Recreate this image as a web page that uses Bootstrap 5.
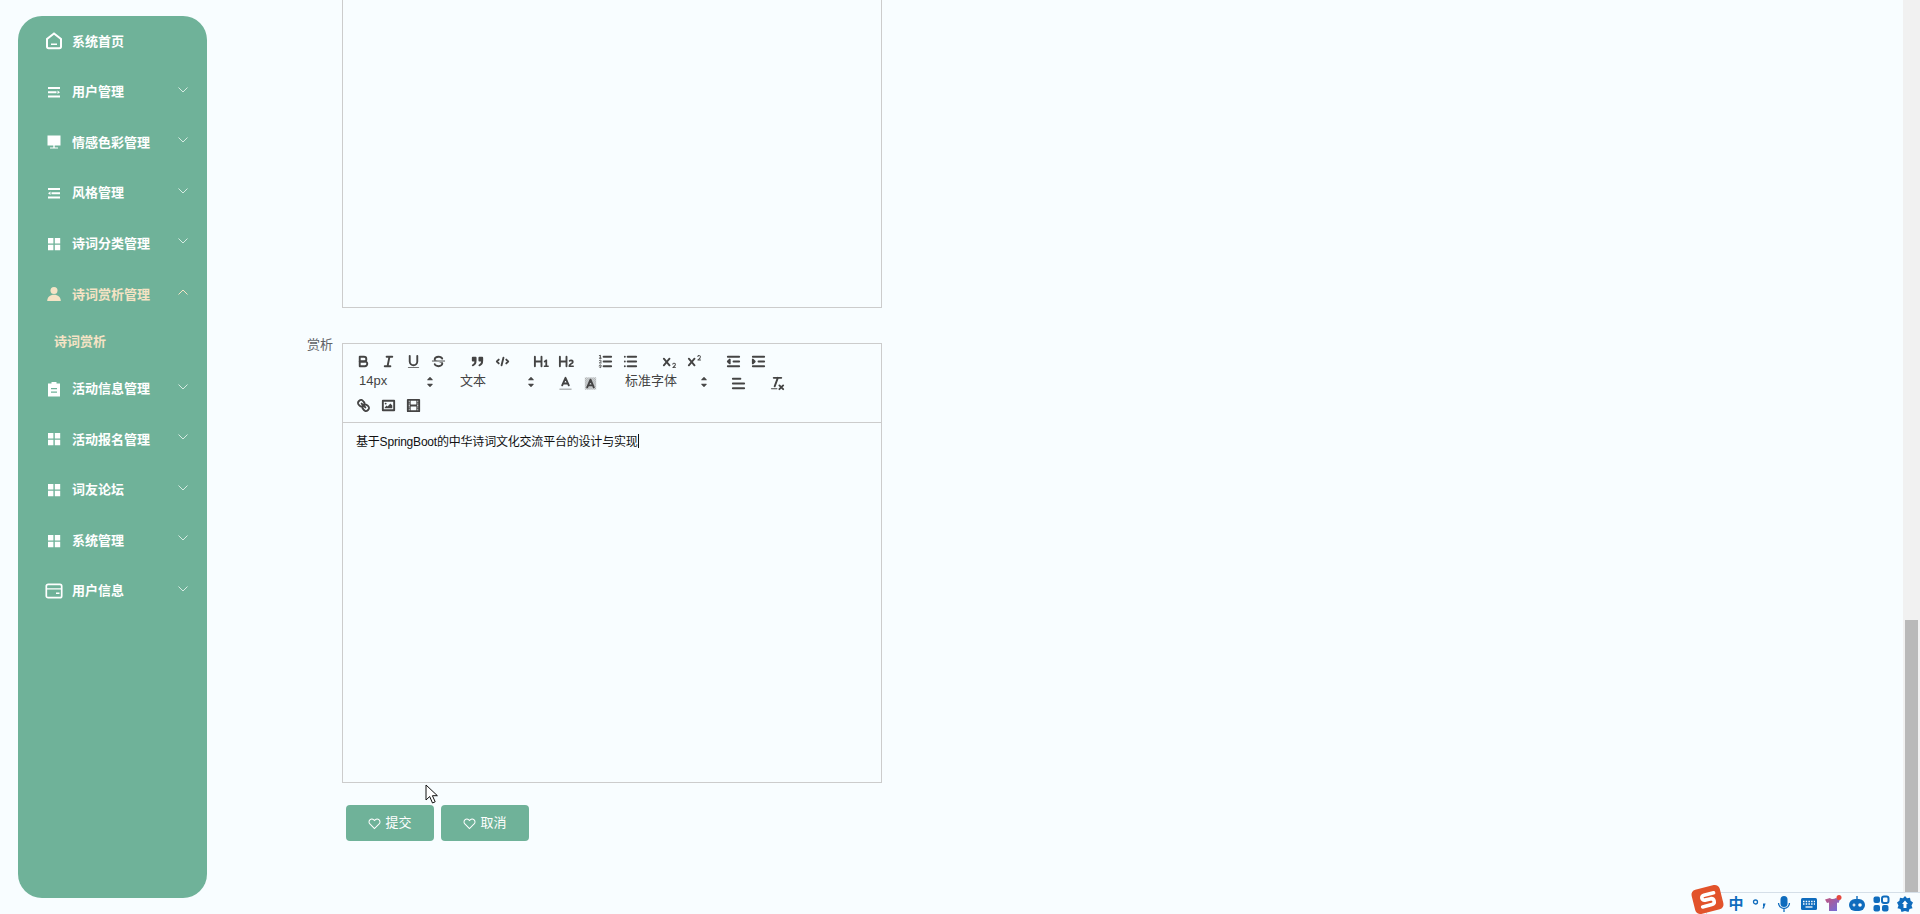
<!DOCTYPE html>
<html lang="zh-CN">
<head>
  <meta charset="UTF-8" />
  <title>诗词赏析</title>
  <link href="https://cdn.jsdelivr.net/npm/bootstrap@5.3.0/dist/css/bootstrap.min.css" rel="stylesheet" />
  <style>
    html, body { height: 914px; overflow: hidden; }
    body {
      background: #f8fdff;
      font-family: "Liberation Sans", "Noto Sans CJK SC", sans-serif;
      color: #333;
    }
    .page-wrap { height: 914px; }

    /* sidebar */
    .side-menu {
      width: 189px;
      height: 882px;
      margin: 16px 0 16px 18px;
      background: #6fb299;
      border-radius: 24px;
      flex-shrink: 0;
      overflow: hidden;
    }
    .menu-row {
      height: 50.6px;
      padding-left: 27px;
      color: #fff;
      font-size: 13px;
      font-weight: 700;
      position: relative;
    }
    .menu-row .menu-ico { width: 18px; height: 18px; margin-right: 9px; flex-shrink: 0; }
    .menu-row .menu-arrow { width: 12px; height: 8px; position: absolute; left: 159px; top: 19px; }
    .menu-row.is-open { color: #f5e3c5; }
    .sub-row {
      height: 44px;
      padding-left: 36px;
      color: #f5e3c5;
      font-size: 13px;
      font-weight: 700;
    }

    /* form */
    .form-area { width: 700px; }
    .old-box {
      width: 540px;
      height: 308px;
      margin-left: 135px;
      border: 1px solid #ccc;
      border-top: 0;
    }
    .form-line { margin-top: 35px; }
    .form-lbl {
      width: 126px;
      text-align: right;
      margin-right: 9px;
      font-size: 13px;
      line-height: 18px;
      margin-top: -7px;
      color: #606266;
    }
    .editor-wrap { width: 540px; }
    .edit-bar {
      height: 80px;
      border: 1px solid #ccc;
      padding: 6px 0 0 8px;
      align-content: flex-start;
    }
    .tool-grp { margin-right: 14px; height: 22px; }
    .tool-btn { width: 25px; height: 22px; }
    .tool-btn svg { width: 17px; height: 17px; }
    .qs { fill: none; stroke: #444; stroke-width: 2; stroke-linecap: round; stroke-linejoin: round; }
    .qt { fill: none; stroke: #444; stroke-width: 1; stroke-linecap: round; stroke-linejoin: round; }
    .qf { fill: #444; stroke: none; }
    .tool-pick {
      width: 87px;
      height: 22px;
      padding: 0 0 0 8px;
      color: #444;
      font-size: 13px;
      line-height: 18px;
    }
    .tool-pick.wide-pick { width: 95px; }
    .tool-pick svg { width: 20px; height: 20px; margin-right: -2px; }
    .edit-body {
      height: 360px;
      border: 1px solid #ccc;
      border-top: 0;
      padding: 10px 13px;
      font-size: 12px;
      line-height: 18px;
      letter-spacing: -.2px;
      color: #111;
    }
    .caret-bar { display: inline-block; width: 1px; height: 14px; background: #111; vertical-align: -2px; }
    .form-btns { margin: 22px 0 0 139px; gap: 7px; }
    .act-btn {
      width: 88px;
      height: 36px;
      padding: 0;
      background: #6fb299;
      border: 0;
      border-radius: 4px;
      color: #fff;
      font-size: 13px;
    }
    .act-btn:hover { background: #6fb299; color: #fff; }
    .act-btn svg { width: 13px; height: 13px; margin-right: 4px; }

    /* scrollbar drawn as its own column */
    .fake-scroll { width: 17px; background: #f1f1f1; padding: 620px 2px 0 2px; flex-shrink: 0; }
    .fake-thumb { height: 294px; background: #b9b9b9; }

    /* things lying over the page */
    .mouse-ptr { position: absolute; left: 425px; top: 784px; width: 14px; height: 21px; }
    .ime-bar {
      position: absolute;
      left: 1706px;
      top: 892px;
      width: 214px;
      height: 22px;
      background: #f8fdff;
      border-top: 1px solid #d5dfe8;
      border-left: 1px solid #d5dfe8;
      color: #0f6cbd;
    }
    .ime-logo {
      position: absolute;
      left: 1693px;
      top: 887px;
      width: 29px;
      height: 25px;
      background: #e2532b;
      border-radius: 5px;
      transform: rotate(-14deg);
    }
    .ime-zh { font-size: 15px; font-weight: 700; margin-left: 17px; width: 24.2px; line-height: 20px; text-align: center; }
    .ime-ico { width: 18px; height: 18px; margin: 0 3.1px; flex-shrink: 0; }
  </style>
</head>
<body>
  <svg width="0" height="0" class="position-absolute">
    <defs>
      <pattern id="hatch" width="2" height="2" patternUnits="userSpaceOnUse"><rect width="1" height="1" fill="#444"/><rect x="1" y="1" width="1" height="1" fill="#444"/></pattern>
    </defs>
    <symbol id="i-grid" viewBox="0 0 18 18"><path fill="currentColor" d="M3 3h5.400v5.400H3zM9.800 3h5.400v5.400H9.800zM3 9.800h5.400v5.400H3zM9.800 9.800h5.400v5.400H9.800z"/></symbol>
    <symbol id="i-down" viewBox="0 0 12 8"><path fill="none" stroke="#d6ebe2" stroke-width="1" d="M1.500 1.500 6 6l4.500-4.500"/></symbol>
    <symbol id="i-heart" viewBox="0 0 14 14"><path fill="none" stroke="#fff" stroke-width="1.100" d="M7 12.400 2 7.400a3 3 0 0 1 0-4.300 3.100 3.100 0 0 1 4.300 0l.7.700.7-.7a3.100 3.100 0 0 1 4.300 0 3 3 0 0 1 0 4.300z"/></symbol>
    <symbol id="i-updown" viewBox="0 0 18 18"><path class="qf" d="M7 11h4l-2 2zM7 7h4L9 5z"/><path class="qt" d="M7 11h4l-2 2zM7 7h4L9 5z"/></symbol>
  </svg>

  <div class="page-wrap d-flex">
    <aside class="side-menu">
      <div class="menu-row d-flex align-items-center">
        <svg class="menu-ico" viewBox="0 0 18 18"><path fill="none" stroke="currentColor" stroke-width="2" d="M9 1.500 2 7v7.600a1.600 1.600 0 0 0 1.600 1.600h10.800a1.600 1.600 0 0 0 1.600-1.600V7z"/><path fill="currentColor" d="M6 11.500h6V13H6z"/></svg>
        系统首页
      </div>
      <div class="menu-row d-flex align-items-center">
        <svg class="menu-ico" viewBox="0 0 18 18"><path fill="currentColor" d="M3 4h12v2H3zM3 8.200h8.500v2H3zM3 12.400h12v2H3zM12.500 7.500 15 9.200l-2.500 1.700z"/></svg>
        用户管理
        <svg class="menu-arrow"><use href="#i-down" /></svg>
      </div>
      <div class="menu-row d-flex align-items-center">
        <svg class="menu-ico" viewBox="0 0 18 18"><path fill="currentColor" d="M2.500 2.500h13v10h-13zM8.300 12.500h1.400v2H8.300zM5 14.600h8v1H5z"/></svg>
        情感色彩管理
        <svg class="menu-arrow"><use href="#i-down" /></svg>
      </div>
      <div class="menu-row d-flex align-items-center">
        <svg class="menu-ico" viewBox="0 0 18 18"><path fill="currentColor" d="M3 4h12v2H3zM6.500 8.200H15v2H6.500zM3 12.400h12v2H3zM5.500 7.500 3 9.200l2.500 1.700z"/></svg>
        风格管理
        <svg class="menu-arrow"><use href="#i-down" /></svg>
      </div>
      <div class="menu-row d-flex align-items-center">
        <svg class="menu-ico"><use href="#i-grid" /></svg>
        诗词分类管理
        <svg class="menu-arrow"><use href="#i-down" /></svg>
      </div>
      <div class="menu-row is-open d-flex align-items-center">
        <svg class="menu-ico" viewBox="0 0 18 18"><circle cx="9" cy="5.400" r="3.500" fill="currentColor"/><path fill="currentColor" d="M2.200 16c0-4 2.800-6.300 6.800-6.300s6.800 2.300 6.800 6.300z"/></svg>
        诗词赏析管理
        <svg class="menu-arrow" viewBox="0 0 12 8"><path fill="none" stroke="#f5e3c5" stroke-width="1" d="M1.500 6.500 6 2l4.500 4.500"/></svg>
      </div>
      <div class="sub-row d-flex align-items-center">诗词赏析</div>
      <div class="menu-row d-flex align-items-center">
        <svg class="menu-ico" viewBox="0 0 18 18"><path fill="currentColor" fill-rule="evenodd" d="M3 3.500h3.500V2h5v1.500H15v13H3zM6 8v1.300h6V8zM6 11.500v1.300h6v-1.300z"/></svg>
        活动信息管理
        <svg class="menu-arrow"><use href="#i-down" /></svg>
      </div>
      <div class="menu-row d-flex align-items-center">
        <svg class="menu-ico"><use href="#i-grid" /></svg>
        活动报名管理
        <svg class="menu-arrow"><use href="#i-down" /></svg>
      </div>
      <div class="menu-row d-flex align-items-center">
        <svg class="menu-ico"><use href="#i-grid" /></svg>
        词友论坛
        <svg class="menu-arrow"><use href="#i-down" /></svg>
      </div>
      <div class="menu-row d-flex align-items-center">
        <svg class="menu-ico"><use href="#i-grid" /></svg>
        系统管理
        <svg class="menu-arrow"><use href="#i-down" /></svg>
      </div>
      <div class="menu-row d-flex align-items-center">
        <svg class="menu-ico" viewBox="0 0 18 18"><rect x="1.300" y="2.300" width="15.400" height="13.400" rx="1.800" fill="none" stroke="currentColor" stroke-width="1.700"/><path fill="currentColor" d="M1.500 6.200h15v1.400h-15zM11 10.500h3.500V12H11z"/></svg>
        用户信息
        <svg class="menu-arrow"><use href="#i-down" /></svg>
      </div>
    </aside>

    <main class="flex-grow-1">
      <div class="form-area">
        <div class="old-box"></div>

        <div class="form-line d-flex">
          <label class="form-lbl">赏析</label>
          <div class="editor-wrap">
            <div class="edit-bar d-flex flex-wrap">
              <span class="tool-grp d-flex">
                <span class="tool-btn d-flex align-items-center justify-content-center"><svg viewBox="0 0 18 18"><path class="qs" d="M5 4h4.500A2.500 2.500 0 0 1 12 6.500 2.500 2.500 0 0 1 9.500 9H5z"/><path class="qs" d="M5 9h5.500a2.500 2.500 0 0 1 2.500 2.500 2.500 2.500 0 0 1-2.500 2.500H5z"/></svg></span>
                <span class="tool-btn d-flex align-items-center justify-content-center"><svg viewBox="0 0 18 18"><path class="qs" d="M7 4h6M5 14h6M8 14l2-10"/></svg></span>
                <span class="tool-btn d-flex align-items-center justify-content-center"><svg viewBox="0 0 18 18"><path class="qs" d="M5 3v6a4 4 0 0 0 4 4 4 4 0 0 0 4-4V3"/><rect class="qf" x="3" y="15" width="12" height="1" rx=".5"/></svg></span>
                <span class="tool-btn d-flex align-items-center justify-content-center"><svg viewBox="0 0 18 18"><path class="qt" d="M15.500 8.500h-13"/><path class="qf" d="M9 8C6.500 7.800 6 7.500 6 6.500 6 5.800 7.300 5 9 5c1.600 0 2.800.7 3 1.300a1 1 0 0 0 1.900-.6C13.400 4.100 11.400 3 9 3 6.200 3 4 4.500 4 6.500a3.200 3.200 0 0 0 .5 1.800z"/><path class="qf" d="M9 10c2.500.2 3 .5 3 1.500 0 .7-1.300 1.500-3 1.500-1.600 0-2.800-.7-3-1.300a1 1 0 1 0-1.900.6C4.600 13.900 6.600 15 9 15c2.800 0 5-1.500 5-3.500a3.200 3.200 0 0 0-.5-1.800z"/></svg></span>
              </span>
              <span class="tool-grp d-flex">
                <span class="tool-btn d-flex align-items-center justify-content-center"><svg viewBox="0 0 18 18"><path class="qf" d="M4 5h3v3H4zM11 5h3v3h-3z"/><path class="qs" d="M4 5h3v3H4zM11 5h3v3h-3zM7 8c0 4-3 5-3 5M14 8c0 4-3 5-3 5"/></svg></span>
                <span class="tool-btn d-flex align-items-center justify-content-center"><svg viewBox="0 0 18 18"><path class="qs" d="M5 7 3 9l2 2M13 7l2 2-2 2M10 5 8 13"/></svg></span>
              </span>
              <span class="tool-grp d-flex">
                <span class="tool-btn d-flex align-items-center justify-content-center"><svg viewBox="0 0 18 18"><path class="qf" d="M10 4v10a1 1 0 0 1-2 0v-4H3v4a1 1 0 0 1-2 0V4a1 1 0 0 1 2 0v4h5V4a1 1 0 0 1 2 0zm6.070 9.210h-1.080V7.600a.54.54 0 0 0-.6-.6h-.63a1 1 0 0 0-.75.3l-1.370 1.270a.54.54 0 0 0-.02.86l.29.31a.54.54 0 0 0 .85.03l.1-.09a1.200 1.200 0 0 0 .24-.35h.02s-.01.31-.01.6v3.280H12.040a.54.54 0 0 0-.6.6v.44a.54.54 0 0 0 .6.6h4.030a.54.54 0 0 0 .6-.6v-.44a.54.54 0 0 0-.6-.6z"/></svg></span>
                <span class="tool-btn d-flex align-items-center justify-content-center"><svg viewBox="0 0 18 18"><path class="qf" d="M16.740 13.810v.44a.54.54 0 0 1-.6.6h-4.290a.58.58 0 0 1-.65-.6v-.24c0-2.910 3.400-3.420 3.400-4.550a.78.78 0 0 0-.85-.78 1.180 1.180 0 0 0-.84.380c-.27.260-.56.370-.86.130l-.43-.34c-.31-.24-.39-.52-.15-.81a2.970 2.970 0 0 1 2.450-1.180 2.450 2.450 0 0 1 2.680 2.410c0 2.450-3.180 2.930-3.280 3.940h2.790a.54.54 0 0 1 .63.600zM9 3a1 1 0 0 0-1 1v4H3V4a1 1 0 0 0-2 0v10a1 1 0 0 0 2 0v-4h5v4a1 1 0 0 0 2 0V4a1 1 0 0 0-1-1z"/></svg></span>
              </span>
              <span class="tool-grp d-flex">
                <span class="tool-btn d-flex align-items-center justify-content-center"><svg viewBox="0 0 18 18"><path class="qs" d="M7 4h8M7 9h8M7 14h8"/><path class="qt" d="M2.500 5.500h2M4.500 10.500h-2c0-.2 1.900-1.100 1.900-2.200a1 1 0 0 0-1.900-.1M2.500 14.800a1 1 0 0 0 1.900-.1.700.700 0 0 0-.6-.7.700.700 0 0 0 .6-.7 1 1 0 0 0-1.900-.1"/><path class="qf" d="M3.500 6A.5.5 0 0 1 3 5.500V3.100l-.3.1a.5.5 0 0 1-.7-.2c-.1-.3 0-.3.300-.5l1-.5a.5.500 0 0 1 .7.500v3a.5.500 0 0 1-.5.500z"/></svg></span>
                <span class="tool-btn d-flex align-items-center justify-content-center"><svg viewBox="0 0 18 18"><path class="qs" d="M6 4h9M6 9h9M6 14h9M3 4h0M3 9h0M3 14h0"/></svg></span>
              </span>
              <span class="tool-grp d-flex">
                <span class="tool-btn d-flex align-items-center justify-content-center"><svg viewBox="0 0 18 18"><path class="qf" d="M15.500 15h-1.640a3.860 3.860 0 0 0 1.910-2.980 1.800 1.800 0 0 0-1.600-1.750A1.920 1.920 0 0 0 12.020 11.700a.5.5 0 1 0 .96.290.91.910 0 0 1 1.050-.73.810.810 0 0 1 .74.760c0 1.080-1.170 1.870-1.940 2.430A1.460 1.460 0 0 0 12 15.500a.5.5 0 0 0 .5.500h3a.5.500 0 0 0 0-1z"/><path class="qf" d="M9.650 5.240a1 1 0 0 0-1.410.11L6 7.960 3.760 5.350a1 1 0 0 0-1.520 1.300L4.680 9.500l-2.440 2.850a1 1 0 1 0 1.520 1.300L6 11.040l2.240 2.610a1 1 0 1 0 1.520-1.300L7.320 9.500l2.440-2.850a1 1 0 0 0-.11-1.410z"/></svg></span>
                <span class="tool-btn d-flex align-items-center justify-content-center"><svg viewBox="0 0 18 18"><path class="qf" d="M15.500 7h-1.640a4 4 0 0 0 1.910-2.980 1.800 1.800 0 0 0-1.600-1.750A1.920 1.920 0 0 0 12.020 3.700a.5.5 0 1 0 .96.290.92.920 0 0 1 1.050-.73.810.810 0 0 1 .74.760c0 1.080-1.160 1.930-1.930 2.490A1.420 1.420 0 0 0 12 7.500a.5.5 0 0 0 .5.500h3a.5.500 0 0 0 0-1z"/><path class="qf" d="M9.650 5.240a1 1 0 0 0-1.410.11L6 7.960 3.760 5.350a1 1 0 1 0-1.520 1.300L4.680 9.500l-2.440 2.850a1 1 0 1 0 1.520 1.300L6 11.040l2.240 2.610a1 1 0 0 0 1.520-1.300L7.320 9.500l2.440-2.850a1 1 0 0 0-.11-1.410z"/></svg></span>
              </span>
              <span class="tool-grp d-flex">
                <span class="tool-btn d-flex align-items-center justify-content-center"><svg viewBox="0 0 18 18"><path class="qs" d="M3 14h12M3 4h12M9 9h6"/><path class="qf" d="M5 7v4L3 9z"/><path class="qs" d="M5 7v4L3 9z"/></svg></span>
                <span class="tool-btn d-flex align-items-center justify-content-center"><svg viewBox="0 0 18 18"><path class="qs" d="M3 14h12M3 4h12M9 9h6"/><path class="qf" d="M3 7v4l2-2z"/><path class="qs" d="M3 7v4l2-2z"/></svg></span>
              </span>

              <span class="tool-grp d-flex">
                <span class="tool-pick d-flex justify-content-between">14px<svg><use href="#i-updown" /></svg></span>
              </span>
              <span class="tool-grp d-flex">
                <span class="tool-pick d-flex justify-content-between">文本<svg><use href="#i-updown" /></svg></span>
              </span>
              <span class="tool-grp d-flex">
                <span class="tool-btn d-flex align-items-center justify-content-center"><svg viewBox="0 0 18 18"><path class="qt" d="M3 15h12" stroke-opacity=".6"/><path class="qs" d="M5.500 11 9 3l3.500 8M11.600 9H6.400"/></svg></span>
                <span class="tool-btn d-flex align-items-center justify-content-center"><svg viewBox="0 0 18 18"><rect x="3" y="2.500" width="12" height="13" fill="url(#hatch)" opacity=".6"/><path class="qs" stroke-width="1.500" d="M5.500 13 9 5l3.500 8M11.600 11H6.400"/></svg></span>
              </span>
              <span class="tool-grp d-flex">
                <span class="tool-pick wide-pick d-flex justify-content-between">标准字体<svg><use href="#i-updown" /></svg></span>
              </span>
              <span class="tool-grp d-flex">
                <span class="tool-btn d-flex align-items-center justify-content-center"><svg viewBox="0 0 18 18"><path class="qs" d="M3 4h8M3 9h12M3 14h12"/></svg></span>
              </span>
              <span class="tool-grp d-flex">
                <span class="tool-btn d-flex align-items-center justify-content-center"><svg viewBox="0 0 18 18"><path class="qs" d="M5 3h8M6 12l3.350-9M11 11l4 4M15 11l-4 4"/><rect class="qf" x="2" y="14" width="7" height="1" rx=".5"/></svg></span>
              </span>
              <span class="tool-grp d-flex">
                <span class="tool-btn d-flex align-items-center justify-content-center"><svg viewBox="0 0 18 18"><path class="qs" d="M7 7l4 4M8.900 4.600a3.500 3.500 0 0 1 .36 4.680A3.500 3.500 0 0 1 4.580 8.900C3.190 7.500 2.040 6.400 4.220 4.220S7.500 3.190 8.900 4.600zM13.420 9.100a3.500 3.500 0 0 0-4.680-.36 3.500 3.500 0 0 0 .36 4.680c1.390 1.390 2.500 2.540 4.680.36s1.030-3.280-.36-4.680z"/></svg></span>
                <span class="tool-btn d-flex align-items-center justify-content-center"><svg viewBox="0 0 18 18"><rect class="qs" x="3" y="4" width="12" height="10"/><circle class="qf" cx="6" cy="7" r="1"/><path class="qf" d="M5 12v-1l2-2 1 1 3-3 2 2v3z"/></svg></span>
                <span class="tool-btn d-flex align-items-center justify-content-center"><svg viewBox="0 0 18 18"><rect class="qs" x="3" y="3" width="12" height="12"/><path class="qf" d="M5 3h1v12H5zM12 3h1v12h-1zM5 8h8v2H5zM3 5h3v1H3zM3 7h3v1H3zM3 10h3v1H3zM3 12h3v1H3zM12 5h3v1h-3zM12 7h3v1h-3zM12 10h3v1h-3zM12 12h3v1h-3z"/></svg></span>
              </span>
            </div>
            <div class="edit-body">基于SpringBoot的中华诗词文化交流平台的设计与实现<span class="caret-bar"></span></div>
          </div>
        </div>

        <div class="form-btns d-flex">
          <button type="button" class="btn act-btn d-flex align-items-center justify-content-center"><svg><use href="#i-heart" /></svg>提交</button>
          <button type="button" class="btn act-btn d-flex align-items-center justify-content-center"><svg><use href="#i-heart" /></svg>取消</button>
        </div>
      </div>
    </main>

    <div class="fake-scroll"><div class="fake-thumb"></div></div>
  </div>

  <svg class="mouse-ptr" viewBox="0 0 14 21"><path fill="#fff" stroke="#111" stroke-width="1" d="M1 1v15l3.700-3.500L7.500 19l2.700-1.200-2.800-6.100h5z"/></svg>

  <div class="ime-bar d-flex align-items-center">
    <span class="ime-zh">中</span>
    <svg class="ime-ico" viewBox="0 0 18 18"><circle cx="4.500" cy="7" r="2" fill="none" stroke="currentColor" stroke-width="1.300"/><path fill="currentColor" d="M12 8.500h2.600l-1.700 5h-1.500l1-2.500H12z"/></svg>
    <svg class="ime-ico" viewBox="0 0 18 18"><rect x="5.500" y="1" width="7" height="11" rx="3.500" fill="currentColor"/><path fill="none" stroke="currentColor" stroke-width="1.300" d="M3.500 8a5.500 5.500 0 0 0 11 0M9 13.500V17"/></svg>
    <svg class="ime-ico" viewBox="0 0 18 18"><rect x="1" y="3" width="16" height="12" rx="1.500" fill="currentColor"/><path stroke="#fff" stroke-width="1.300" stroke-dasharray="1.500 1.200" d="M3 6.500h12M3 9h12"/><path stroke="#fff" stroke-width="1.300" d="M5.500 12h7"/></svg>
    <svg class="ime-ico" viewBox="0 0 18 18"><defs><linearGradient id="shirtGrad" x1="0" y1="0" x2="1" y2="1"><stop offset="0" stop-color="#c2557f"/><stop offset="1" stop-color="#6b6fe0"/></linearGradient></defs><path fill="url(#shirtGrad)" d="M1 4.500 6 3c1 1.300 4 1.300 6 0l4 1.500-1.500 3.500-1.500-.5V16H5V7.500L3 8z"/><circle cx="15" cy="2.500" r="2.500" fill="#e5483f"/></svg>
    <svg class="ime-ico" viewBox="0 0 18 18"><path fill="currentColor" d="M8.300 1h1.400v3H8.300z"/><rect x="1" y="4" width="16" height="12" rx="6" fill="currentColor"/><circle cx="12" cy="10" r="1.800" fill="#fff"/><path stroke="#fff" stroke-width="1.200" d="M4.500 10h3M6 8.500v3"/></svg>
    <svg class="ime-ico" viewBox="0 0 18 18"><rect x="1.500" y="1.500" width="6.500" height="6.500" rx="2" fill="currentColor"/><rect x="10" y="1.500" width="6.500" height="6.500" rx="2" fill="none" stroke="currentColor" stroke-width="2"/><rect x="1.500" y="10" width="6.500" height="6.500" rx="2" fill="currentColor"/><rect x="10" y="10" width="6.500" height="6.500" rx="2" fill="currentColor"/></svg>
    <svg class="ime-ico" viewBox="0 0 18 18"><path fill="currentColor" d="M9 1 11 3.300l3-.6.600 3L17 7.500l-1.500 3 1 2.700-3 .8-1 3-3.500-1-3.500 1-1-3-3-.8 1-2.700L1 7.500l2.400-1.800.6-3 3 .6z"/><path fill="#fff" d="M9 5.500 12 9h-1.500v4h-3V9H6z"/></svg>
  </div>
  <div class="ime-logo d-flex align-items-center justify-content-center">
    <svg width="20" height="18" viewBox="0 0 20 18"><path fill="none" stroke="#fff" stroke-width="3.600" stroke-linecap="round" d="M17 3.500H7C3.500 3.500 3.500 8 7 8.500h6c3.500.5 3.500 6-.5 6H3"/></svg>
  </div>
</body>
</html>
